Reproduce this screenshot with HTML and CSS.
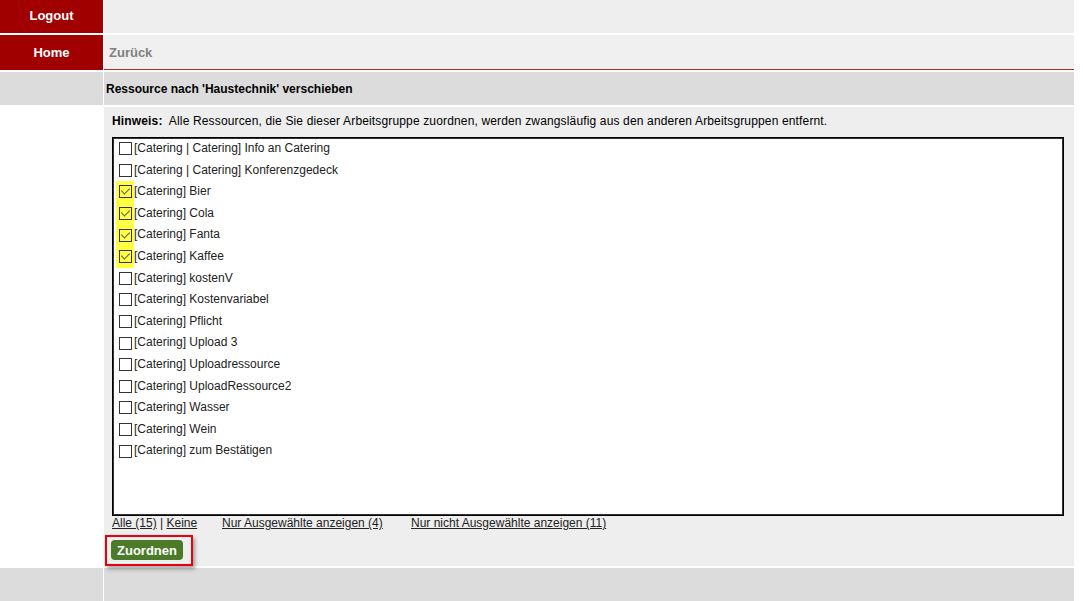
FILE: index.html
```html
<!DOCTYPE html>
<html lang="de">
<head>
    <meta charset="UTF-8">
    <title>Ressource verschieben</title>
    <link rel="stylesheet" href="styles.css">
</head>
<body>
    <div class="page">
        <div class="side side-red"><a href="#">Logout</a></div>
        <div class="main main-top"></div>

        <div class="side side-red"><a href="#">Home</a></div>
        <div class="main main-nav"><a href="#">Zurück</a></div>

        <div class="side side-gray"></div>
        <div class="main main-title">Ressource nach 'Haustechnik' verschieben</div>

        <div class="side side-white"></div>
        <div class="main main-content">
            <p class="hint"><b>Hinweis:</b>&nbsp; Alle Ressourcen, die Sie dieser Arbeitsgruppe zuordnen, werden zwangsläufig aus den anderen Arbeitsgruppen entfernt.</p>

            <div class="res-list">
                <label class="res-item"><span class="cb"><input type="checkbox"></span>[Catering | Catering] Info an Catering</label>
                <label class="res-item"><span class="cb"><input type="checkbox"></span>[Catering | Catering] Konferenzgedeck</label>
                <label class="res-item"><span class="cb marked"><input type="checkbox" checked></span>[Catering] Bier</label>
                <label class="res-item"><span class="cb marked"><input type="checkbox" checked></span>[Catering] Cola</label>
                <label class="res-item"><span class="cb marked"><input type="checkbox" checked></span>[Catering] Fanta</label>
                <label class="res-item"><span class="cb marked"><input type="checkbox" checked></span>[Catering] Kaffee</label>
                <label class="res-item"><span class="cb"><input type="checkbox"></span>[Catering] kostenV</label>
                <label class="res-item"><span class="cb"><input type="checkbox"></span>[Catering] Kostenvariabel</label>
                <label class="res-item"><span class="cb"><input type="checkbox"></span>[Catering] Pflicht</label>
                <label class="res-item"><span class="cb"><input type="checkbox"></span>[Catering] Upload 3</label>
                <label class="res-item"><span class="cb"><input type="checkbox"></span>[Catering] Uploadressource</label>
                <label class="res-item"><span class="cb"><input type="checkbox"></span>[Catering] UploadRessource2</label>
                <label class="res-item"><span class="cb"><input type="checkbox"></span>[Catering] Wasser</label>
                <label class="res-item"><span class="cb"><input type="checkbox"></span>[Catering] Wein</label>
                <label class="res-item"><span class="cb"><input type="checkbox"></span>[Catering] zum Bestätigen</label>
            </div>

            <div class="filter-links">
                <span class="link-all"><a href="#">Alle (15)</a> | <a href="#">Keine</a></span>
                <a class="link-sel" href="#">Nur Ausgewählte anzeigen (4)</a>
                <a href="#">Nur nicht Ausgewählte anzeigen (11)</a>
            </div>

            <div class="submit-wrap">
                <button type="button" class="assign-btn">Zuordnen</button>
            </div>
        </div>

        <div class="side side-gray"></div>
        <div class="main main-foot"></div>
    </div>
</body>
</html>
```

FILE: styles.css
```css
body {
    margin: 0;
    background: #fff;
    font-family: "Liberation Sans", Arial, sans-serif;
    font-size: 12px;
    color: #000;
}

.page {
    display: grid;
    grid-template-columns: 103px 1fr;
    grid-template-rows: 33px 35px 33px 459px 33px;
    column-gap: 1px;
    row-gap: 2px;
    margin-right: 9px;
}

.side {
    display: flex;
    align-items: center;
    justify-content: center;
}

.side a {
    color: #fff;
    font-weight: bold;
    font-size: 13px;
    text-decoration: none;
}

.side-red {
    background: #a00000;
}

.side-red:first-child {
    padding-bottom: 2px;
}

.side-gray {
    background: #dcdcdc;
}

.side-white {
    background: #fff;
}

.main-top {
    background: #eeeeee;
}

.main-nav {
    background: #f0f0f0;
    border-bottom: 1px solid #b22a2a;
    display: flex;
    align-items: center;
    padding-left: 5px;
}

.main-nav a {
    color: #808080;
    font-weight: bold;
    font-size: 13px;
    text-decoration: none;
}

.main-title {
    background: #dcdcdc;
    display: flex;
    align-items: center;
    padding-left: 2px;
    font-weight: bold;
    padding-top: 1px;
}

.main-content {
    background: #eeeeee;
    padding: 8px 10px 0 8px;
}

.hint {
    margin: 0 0 10px 0;
    line-height: 12px;
    letter-spacing: 0.15px;
}

.res-list {
    background: #fff;
    border: 1px solid #000;
    box-shadow: inset 0 0 0 1px #333;
    height: 377px;
    padding-left: 3px;
    overflow: hidden;
}

.res-item {
    display: flex;
    align-items: stretch;
    height: 21.6px;
    line-height: 21.6px;
    color: #222;
}

.cb {
    display: flex;
    align-items: center;
    width: 18px;
    padding-left: 3px;
    box-sizing: border-box;
}

.cb.marked {
    background: #ffff44;
}

.cb input {
    appearance: none;
    -webkit-appearance: none;
    margin: 0;
    width: 13px;
    height: 13px;
    border: 1px solid #333;
    background: transparent;
    position: relative;
}

.cb input:checked::after {
    content: "";
    position: absolute;
    left: 3px;
    top: 0px;
    width: 4px;
    height: 7px;
    border-right: 1.5px solid #555;
    border-bottom: 1.5px solid #555;
    transform: rotate(45deg);
}

.filter-links {
    display: flex;
    height: 14px;
    line-height: 14px;
    color: #222;
}

.filter-links a {
    color: #222;
    text-decoration: underline;
}

.link-all {
    width: 110px;
}

.link-sel {
    width: 189px;
}

.submit-wrap {
    display: flex;
    width: fit-content;
    margin: 5px 0 0 -7px;
    padding: 3px 8px 4px 4px;
    border: 2px solid #e8000b;
    box-shadow: 2px 3px 4px rgba(0, 0, 0, 0.35);
    position: relative;
    z-index: 1;
}

.assign-btn {
    display: block;
    background: #4b7b28;
    color: #fff;
    font-family: "Liberation Sans", Arial, sans-serif;
    font-weight: bold;
    font-size: 13px;
    border: none;
    border-radius: 4px;
    height: 20px;
    padding: 0 6px;
    cursor: pointer;
}

.main-foot {
    background: #dcdcdc;
}
```
